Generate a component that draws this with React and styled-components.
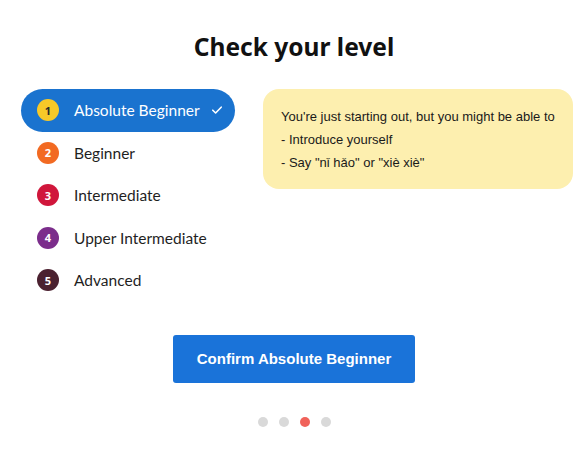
import React, { useState } from 'react';
import styled, { createGlobalStyle } from 'styled-components';

const GlobalStyle = createGlobalStyle`
  body {
    margin: 0;
    background: #ffffff;
    font-family: "Noto Sans", "Liberation Sans", sans-serif;
  }
`;

const levels = [
  { name: 'Absolute Beginner', color: '#f7c928', text: '#2b2b2b' },
  { name: 'Beginner', color: '#f26a22', text: '#ffffff' },
  { name: 'Intermediate', color: '#d0163b', text: '#ffffff' },
  { name: 'Upper Intermediate', color: '#7b2d8b', text: '#ffffff' },
  { name: 'Advanced', color: '#4b2130', text: '#ffffff' },
];

const Page = styled.div`
  width: 588px;
  height: 450px;
  display: flex;
  flex-direction: column;
  align-items: center;
  box-sizing: border-box;
  padding-top: 30px;
`;

const Title = styled.h1`
  margin: 0;
  font-size: 24.5px;
  font-weight: 700;
  color: #111;
  line-height: 34px;
`;

const Content = styled.div`
  align-self: stretch;
  display: flex;
  align-items: flex-start;
  gap: 28px;
  padding: 0 15px 0 21px;
  margin-top: 25px;
`;

const List = styled.ul`
  list-style: none;
  margin: 0;
  padding: 0;
  width: 214px;
  flex-shrink: 0;
`;

const Row = styled.li`
  display: flex;
  align-items: center;
  height: 42.5px;
  padding: 0 12px 0 16px;
  box-sizing: border-box;
  border-radius: 22px;
  cursor: pointer;
  white-space: nowrap;
  font-family: Lato, "Noto Sans", sans-serif;
  font-size: 15.5px;
  background: ${(p) => (p.$active ? '#1a73cf' : 'transparent')};
  color: ${(p) => (p.$active ? '#ffffff' : '#1f1f1f')};
`;

const Badge = styled.span`
  width: 22px;
  height: 22px;
  border-radius: 50%;
  background: ${(p) => p.$bg};
  color: ${(p) => p.$fg};
  font-family: "Noto Sans", sans-serif;
  font-size: 11px;
  font-weight: 700;
  display: flex;
  align-items: center;
  justify-content: center;
  margin-right: 15px;
  flex-shrink: 0;
`;

const Label = styled.span`
  flex: 1;
`;

const Info = styled.div`
  flex: 1;
  height: 100px;
  box-sizing: border-box;
  background: #fdefaf;
  border-radius: 16px;
  padding: 16px 18px;
  font-family: "Liberation Sans", Arial, sans-serif;
  font-size: 13px;
  line-height: 23px;
  color: #1a1a1a;
`;

const Button = styled.button`
  margin-top: 33px;
  height: 48px;
  padding: 0 24px;
  border: none;
  border-radius: 3px;
  background: #1a73d9;
  color: #fff;
  font-family: "Liberation Sans", Arial, sans-serif;
  font-weight: 700;
  font-size: 15px;
  cursor: pointer;
`;

const Dots = styled.div`
  display: flex;
  gap: 11px;
  margin-top: 34px;
`;

const Dot = styled.span`
  width: 10px;
  height: 10px;
  border-radius: 50%;
  background: ${(p) => (p.$active ? '#f0625a' : '#d9d9d9')};
`;

const Check = () => (
  <svg width="12" height="12" viewBox="0 0 12 12" fill="none">
    <path d="M1.8 6.2 L4.6 9 L10.2 3.2" stroke="#fff" strokeWidth="1.6" strokeLinecap="round" strokeLinejoin="round" />
  </svg>
);

export default function App() {
  const [selected, setSelected] = useState(0);
  const level = levels[selected];

  return (
    <Page>
      <GlobalStyle />
      <Title>Check your level</Title>
      <Content>
        <List>
          {levels.map((l, i) => (
            <Row key={l.name} $active={i === selected} onClick={() => setSelected(i)}>
              <Badge $bg={l.color} $fg={l.text}>{i + 1}</Badge>
              <Label>{l.name}</Label>
              {i === selected && <Check />}
            </Row>
          ))}
        </List>
        <Info>
          You're just starting out, but you might be able to
          <br />- Introduce yourself
          <br />- Say "nǐ hǎo" or "xiè xiè"
        </Info>
      </Content>
      <Button>Confirm {level.name}</Button>
      <Dots>
        {[0, 1, 2, 3].map((d) => (
          <Dot key={d} $active={d === 2} />
        ))}
      </Dots>
    </Page>
  );
}
